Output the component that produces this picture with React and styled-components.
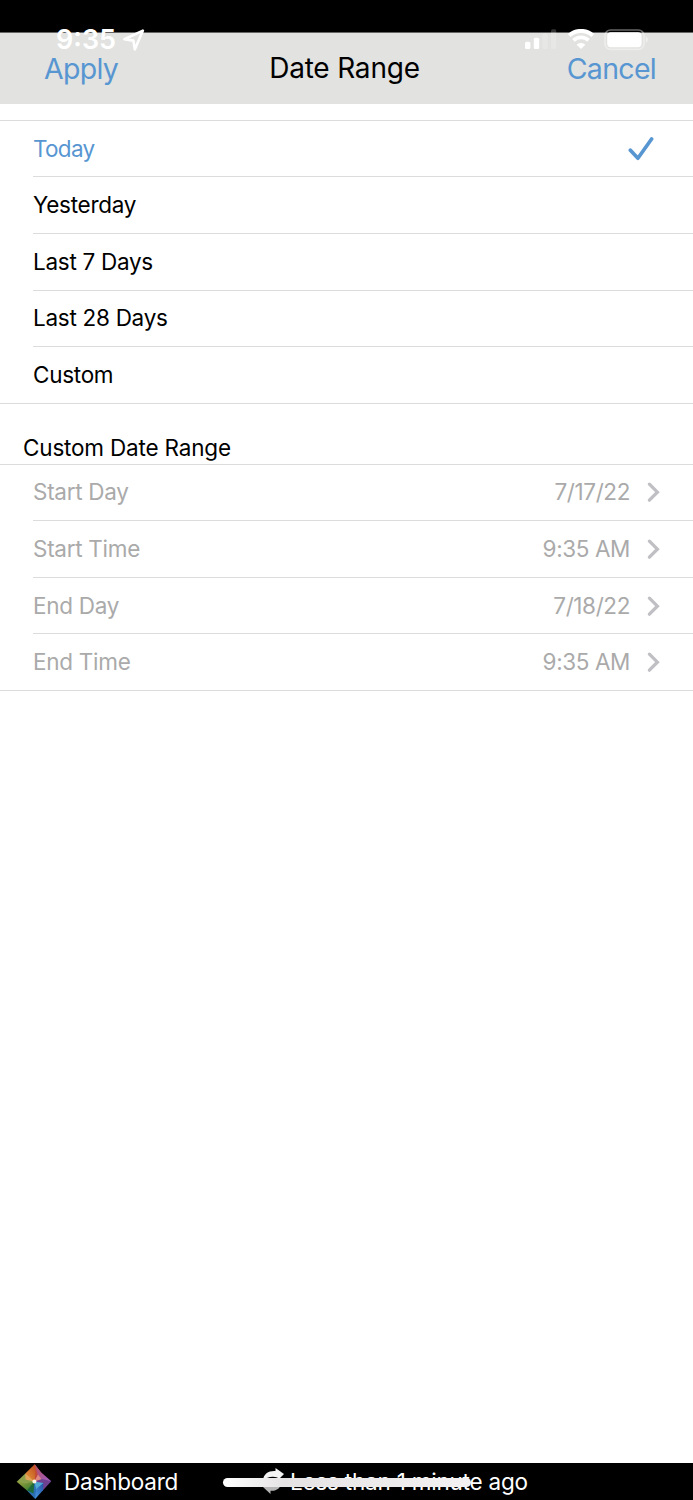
import React from "react";
import styled, { createGlobalStyle } from "styled-components";

const presets = ["Today", "Yesterday", "Last 7 Days", "Last 28 Days", "Custom"];

const customFields = [
  { label: "Start Day", value: "7/17/22" },
  { label: "Start Time", value: "9:35 AM" },
  { label: "End Day", value: "7/18/22" },
  { label: "End Time", value: "9:35 AM" },
];

function App() {
  return (
    <Screen>
      <GlobalStyle />
      <TopInset />
      <StatusBar>
        <StatusLeft>
          <Time>9:35</Time>
          <LocationIcon />
        </StatusLeft>
        <StatusRight>
          <SignalIcon />
          <WifiIcon />
          <BatteryIcon />
        </StatusRight>
      </StatusBar>
      <Header>
        <HeaderButton>Apply</HeaderButton>
        <Title>Date Range</Title>
        <HeaderButton $end>Cancel</HeaderButton>
      </Header>
      <Main>
        <List>
          {presets.map((preset) => (
            <Row key={preset}>
              <RowContent $selected={preset === "Today"}>
                <span>{preset}</span>
                {preset === "Today" && <CheckIcon />}
              </RowContent>
            </Row>
          ))}
        </List>
        <SectionTitle>Custom Date Range</SectionTitle>
        <List>
          {customFields.map((field) => (
            <Row key={field.label}>
              <RowContent $disabled>
                <span>{field.label}</span>
                <Value>
                  {field.value}
                  <ChevronIcon />
                </Value>
              </RowContent>
            </Row>
          ))}
        </List>
      </Main>
      <Footer>
        <LogoIcon />
        <FooterLabel>Dashboard</FooterLabel>
        <Refresh>
          <RefreshIcon />
          <FooterText>Less than 1 minute ago</FooterText>
        </Refresh>
        <HomeIndicator />
      </Footer>
    </Screen>
  );
}

export default App;

function LocationIcon() {
  return (
    <svg width="24" height="24" viewBox="0 0 24 24" fill="none">
      <path
        d="M20.9 2.6L2.4 11.2L11.4 12.6L12.8 21.4Z"
        stroke="#fff"
        strokeWidth="2.6"
        strokeLinejoin="round"
      />
    </svg>
  );
}

function SignalIcon() {
  return (
    <svg width="32" height="21" viewBox="0 0 32 21" fill="#fff">
      <rect x="0" y="12.7" width="5.4" height="7.3" rx="1.6" />
      <rect x="8.8" y="8.7" width="5.4" height="11.3" rx="1.6" />
      <rect x="17.4" y="4.3" width="5.4" height="15.7" rx="1.6" opacity="0.2" />
      <rect x="26" y="0.2" width="5.2" height="19.8" rx="1.6" opacity="0.2" />
    </svg>
  );
}

function WifiIcon() {
  return (
    <svg width="28" height="21" viewBox="0 0 28 21" fill="none">
      <path d="M2.2 6.5A17.4 17.4 0 0 1 25.8 6.5" stroke="#fff" strokeWidth="4" />
      <path d="M6.5 11.3A10.9 10.9 0 0 1 21.5 11.3" stroke="#fff" strokeWidth="3.8" />
      <path
        d="M14 19.9L9.7 15.7Q9.8 15.1 11.4 14.4Q14 13.4 16.6 14.4Q18.2 15.1 18.3 15.7Z"
        fill="#fff"
      />
    </svg>
  );
}

function BatteryIcon() {
  return (
    <svg width="44" height="22" viewBox="0 0 44 22" fill="none">
      <rect
        x="1"
        y="1"
        width="39"
        height="19.4"
        rx="5.5"
        stroke="#fff"
        strokeWidth="1.6"
        opacity="0.4"
      />
      <rect x="3.2" y="3.2" width="34.4" height="15" rx="3.6" fill="#fff" />
      <path d="M41.8 7.6Q44 8.4 44 10.6Q44 12.9 41.8 13.8Z" fill="#fff" opacity="0.45" />
    </svg>
  );
}

function CheckIcon() {
  return (
    <svg width="26" height="26" viewBox="0 0 26 26" fill="none">
      <path
        d="M2.4 14.2L9.9 22.2L23.6 3"
        stroke="#5896d2"
        strokeWidth="3.7"
        strokeLinecap="round"
        strokeLinejoin="round"
      />
    </svg>
  );
}

function ChevronIcon() {
  return (
    <svg width="14" height="22" viewBox="0 0 14 22" fill="none">
      <path
        d="M3.4 3.2L11.4 11.2L3.4 19.2"
        stroke="#c0c0c4"
        strokeWidth="3.3"
        strokeLinecap="round"
        strokeLinejoin="miter"
      />
    </svg>
  );
}

function LogoIcon() {
  return (
    <svg width="36" height="36" viewBox="0 0 36 36">
      <defs>
        <linearGradient id="warm" x1="0" y1="1" x2="1" y2="0">
          <stop offset="0" stopColor="#e8a03c" />
          <stop offset="1" stopColor="#b8401c" />
        </linearGradient>
        <linearGradient id="violet" x1="0" y1="0" x2="1" y2="1">
          <stop offset="0" stopColor="#b8505f" />
          <stop offset="1" stopColor="#9a5cc4" />
        </linearGradient>
        <linearGradient id="blue" x1="1" y1="0" x2="0" y2="1">
          <stop offset="0" stopColor="#2450a0" />
          <stop offset="1" stopColor="#4aa0ea" />
        </linearGradient>
        <linearGradient id="green" x1="0" y1="0" x2="1" y2="1">
          <stop offset="0" stopColor="#a6a53c" />
          <stop offset="1" stopColor="#277832" />
        </linearGradient>
      </defs>
      <path d="M18.7 0.3L9.3 9.6L10.5 14.5L18.3 17.6L21.5 9Z" fill="url(#warm)" />
      <path d="M18.7 0.3L25.6 9.6L18.3 17.6L19.5 9Z" fill="#c14a3c" />
      <path d="M18.7 0.3L25.3 8.6L35.3 17.2L25.5 17.8L21.5 10Z" fill="url(#violet)" />
      <path d="M22 10.5L27 17.6L18.3 17.6Z" fill="#e08a82" />
      <path d="M35.3 17.2L27 26.2L25 21L18.3 17.6L26 15Z" fill="#704191" />
      <path d="M27.5 18.5L27 26.2L19.2 34.9L17.5 26L22 22Z" fill="url(#blue)" />
      <path d="M18.3 17.6L27.5 19L19.5 25.5Z" fill="#51a9d5" />
      <path d="M19.2 34.9L11 26.6L14 22L18.3 17.6L20 25.5Z" fill="#2d6fb5" />
      <path d="M11 26.6L0.7 17.8L10.5 16.5L18.3 17.6L16.5 27.5Z" fill="url(#green)" />
      <path d="M11 26.6L18.3 17.6L17.5 29.5Z" fill="#1d6b3a" />
      <path d="M0.7 17.8L9.3 9.6L12 14.5L18.3 17.6L9.5 19.5Z" fill="#8ba04a" />
      <path d="M9.3 9.6L18.3 17.6L9.5 15.5Z" fill="#e0a55a" />
      <circle cx="18.4" cy="17.6" r="2" fill="#fff4df" />
    </svg>
  );
}

function RefreshIcon() {
  return (
    <svg width="24" height="28" viewBox="0 0 24 28">
      <path
        d="M1 12.5C1.5 5.5 7 2.5 13.5 3V0L22 6L15.5 12.5V9.4C9 7.7 5 9.5 1 12.5Z"
        fill="#f4f4f4"
      />
      <path
        d="M19.5 14.5C18.5 20.5 14.5 23.2 8.5 22.7V26L1 19L7 13.5V17C12 18.5 16 17.8 19.5 14.5Z"
        fill="#b5b5b5"
      />
    </svg>
  );
}

const GlobalStyle = createGlobalStyle`
  * {
    box-sizing: border-box;
  }
  body {
    margin: 0;
    background: #fff;
    font-family: Inter, "Liberation Sans", sans-serif;
  }
  svg {
    display: block;
    flex-shrink: 0;
  }
`;

const Screen = styled.div`
  position: relative;
  display: flex;
  flex-direction: column;
  width: 693px;
  height: 1500px;
  overflow: hidden;
  background: #fff;
`;

const TopInset = styled.div`
  height: 33px;
  flex-shrink: 0;
  background: #000;
  border-bottom: 1px solid #666;
`;

/* The system bar floats over the sheet header. */
const StatusBar = styled.div`
  position: absolute;
  z-index: 1;
  top: 29px;
  left: 0;
  right: 0;
  display: flex;
  justify-content: space-between;
  padding: 0 45px 0 56px;
`;

const StatusLeft = styled.div`
  display: flex;
  gap: 6px;
  height: 22px;
  align-items: center;
`;

const StatusRight = styled.div`
  display: flex;
  gap: 9.5px;
`;

const Time = styled.span`
  width: 60px;
  color: #fff;
  font-size: 27px;
  font-weight: 600;
  line-height: 22px;
  white-space: nowrap;
`;

const Header = styled.header`
  display: grid;
  grid-template-columns: 1fr auto 1fr;
  align-items: center;
  height: 71px;
  flex-shrink: 0;
  padding: 0 37px 0 33px;
  background: #e2e2e0;
`;

const HeaderButton = styled.button`
  justify-self: ${(props) => (props.$end ? "end" : "start")};
  margin-left: ${(props) => (props.$end ? "0" : "11px")};
  padding: 0;
  border: 0;
  background: none;
  color: #5896d2;
  font-family: inherit;
  font-size: 28.5px;
  letter-spacing: -0.7px;
  line-height: 34px;
`;

const Title = styled.h1`
  margin: 0 0 2px;
  font-size: 28px;
  font-weight: 400;
  letter-spacing: -0.2px;
  line-height: 34px;
`;

const Main = styled.main`
  flex: 1;
  padding-top: 15.75px;
`;

const Row = styled.div`
  height: 56.6px;
  padding-left: 33px;
`;

const RowContent = styled.div`
  display: flex;
  align-items: center;
  justify-content: space-between;
  height: 100%;
  padding-right: 33px;
  border-top: 1px solid #dcdcdc;
  color: ${(props) =>
    props.$selected ? "#5896d2" : props.$disabled ? "#aaa" : "#000"};
  font-size: 22.5px;
  letter-spacing: ${(props) => (props.$selected ? "-0.7px" : "-0.28px")};
  line-height: 28px;

  > svg {
    margin-right: 6px;
  }
`;

const List = styled.section`
  border-bottom: 1px solid #dcdcdc;

  ${Row}:first-child {
    padding-left: 0;

    ${RowContent} {
      padding-left: 33px;
    }
  }
`;

const Value = styled.span`
  display: flex;
  align-items: center;
  gap: 16px;
  letter-spacing: -0.4px;
`;

const SectionTitle = styled.h2`
  height: 59.85px;
  margin: 0;
  padding: 30px 0 0 23px;
  font-size: 22.5px;
  font-weight: 400;
  letter-spacing: -0.18px;
  line-height: 28px;
`;

const Footer = styled.footer`
  position: relative;
  display: flex;
  align-items: center;
  height: 37px;
  flex-shrink: 0;
  padding-left: 16px;
  background: #000;
  color: #fff;
  font-size: 22.5px;
  letter-spacing: -0.22px;
`;

const FooterLabel = styled.span`
  width: 196px;
  padding-left: 12px;
  line-height: 28px;
`;

const Refresh = styled.div`
  display: flex;
  align-items: center;
  gap: 4px;
  padding-left: 14px;
`;

const FooterText = styled.span`
  line-height: 28px;
  white-space: nowrap;
`;

const HomeIndicator = styled.div`
  position: absolute;
  top: 15px;
  left: 223px;
  width: 248px;
  height: 9px;
  border-radius: 5px;
  background: linear-gradient(90deg, #fff, #e5e3e4 25%, #f3f1f2);
`;
